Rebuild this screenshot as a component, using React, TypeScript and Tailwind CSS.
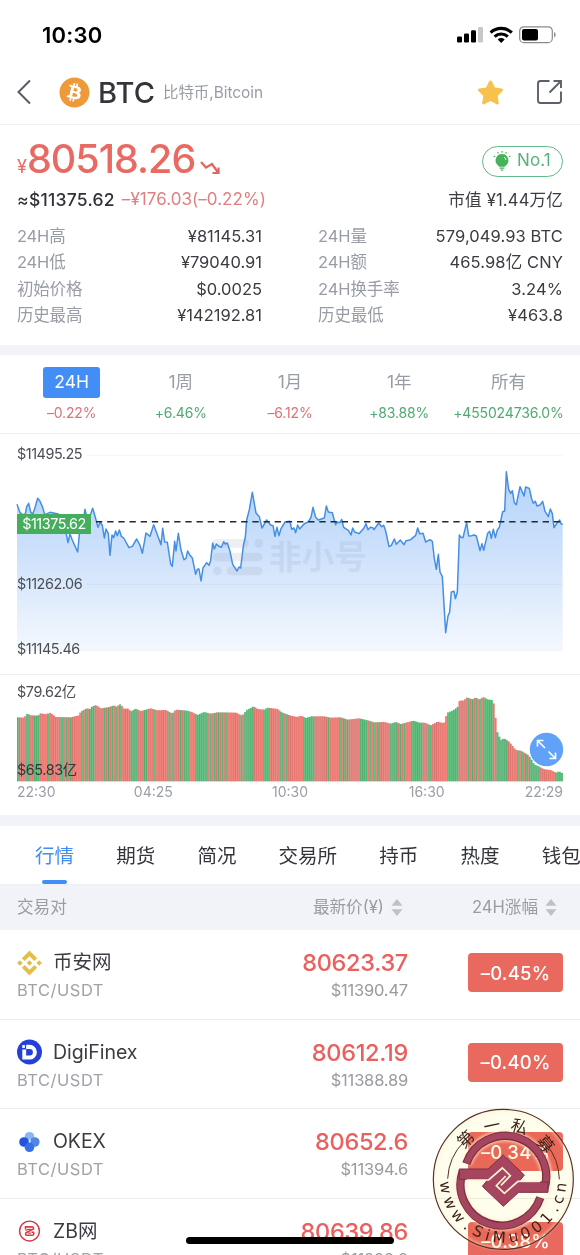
import { FaBitcoin, FaStar } from "react-icons/fa";
import { SiBinance } from "react-icons/si";

type Point = [number, number];

const stats = [
  ["24H高", "¥81145.31", "24H量", "579,049.93 BTC"],
  ["24H低", "¥79040.91", "24H额", "465.98亿 CNY"],
  ["初始价格", "$0.0025", "24H换手率", "3.24%"],
  ["历史最高", "¥142192.81", "历史最低", "¥463.8"],
];

const periods = [
  { label: "24H", change: "–0.22%", active: true },
  { label: "1周", change: "+6.46%" },
  { label: "1月", change: "–6.12%" },
  { label: "1年", change: "+83.88%" },
  { label: "所有", change: "+455024736.0%" },
];

const tabs = ["行情", "期货", "简况", "交易所", "持币", "热度", "钱包"];

// chart units are a third of a css pixel
const priceLine: Point[] = [
  [51, 193], [60, 218], [68, 224], [76, 222], [80, 200], [86, 190], [92, 216], [98, 222], [104, 206], [113, 175], [120, 184],
  [128, 202], [134, 224], [150, 217], [175, 222], [195, 262], [204, 308], [210, 282], [216, 298], [233, 336], [240, 262],
  [250, 240], [255, 208], [262, 236], [270, 228], [278, 205], [286, 232], [294, 262], [300, 247], [307, 256], [313, 294],
  [318, 267], [325, 281], [330, 346], [336, 285], [341, 293], [347, 273], [352, 287], [358, 270], [364, 289], [371, 294],
  [387, 323], [397, 319], [410, 297], [420, 316], [427, 340], [438, 279], [450, 289], [461, 254], [483, 314], [488, 265],
  [494, 306], [502, 307], [512, 372], [517, 379], [524, 304], [528, 333], [535, 280], [543, 330], [552, 359], [558, 355],
  [563, 333], [570, 346], [577, 354], [587, 403], [592, 388], [597, 387], [603, 423], [609, 384], [620, 368], [627, 376],
  [632, 362], [638, 309], [643, 327], [649, 312], [656, 318], [664, 322], [671, 305], [676, 312], [682, 309], [690, 334],
  [698, 373], [711, 393], [717, 381], [722, 384], [730, 318], [736, 291], [740, 240], [748, 209], [757, 157], [768, 219],
  [778, 230], [786, 264], [800, 240], [812, 255], [819, 257], [825, 289], [831, 262], [837, 287], [843, 266], [855, 246],
  [870, 244], [875, 268], [882, 264], [887, 278], [893, 255], [899, 267], [912, 252], [925, 245], [933, 232], [939, 202],
  [947, 232], [955, 240], [973, 234], [979, 198], [985, 216], [997, 218], [1003, 241], [1007, 254], [1012, 246],
  [1020, 248], [1025, 238], [1031, 262], [1045, 271], [1053, 285], [1058, 264], [1064, 276], [1077, 281], [1092, 264],
  [1098, 251], [1104, 269], [1111, 262], [1118, 263], [1122, 269], [1136, 249], [1145, 260], [1151, 256], [1157, 273],
  [1167, 320], [1174, 316], [1183, 297], [1189, 313], [1201, 300], [1212, 314], [1218, 302], [1232, 299], [1247, 286],
  [1253, 264], [1259, 281], [1269, 280], [1277, 306], [1290, 299], [1297, 304], [1303, 356], [1309, 388], [1315, 343],
  [1320, 396], [1327, 410], [1337, 578], [1344, 528], [1349, 516], [1354, 456], [1362, 454], [1366, 476], [1372, 456],
  [1378, 285], [1383, 292], [1389, 293], [1400, 247], [1406, 288], [1414, 287], [1422, 285], [1429, 288], [1440, 332],
  [1446, 311], [1451, 331], [1463, 280], [1469, 274], [1474, 295], [1480, 268], [1486, 293], [1492, 270], [1498, 262],
  [1508, 215], [1514, 213], [1519, 95], [1526, 148], [1532, 160], [1537, 152], [1543, 188], [1549, 194], [1560, 140],
  [1572, 168], [1577, 141], [1588, 145], [1595, 177], [1600, 190], [1606, 184], [1611, 198], [1620, 195], [1628, 184],
  [1635, 214], [1645, 230], [1651, 207], [1657, 221], [1662, 263], [1672, 248], [1679, 240], [1684, 253], [1688, 252],
];

const volumeTops: Point[] = [
  [51, 142], [70, 143], [80, 131], [90, 136], [112, 137], [118, 130], [140, 133], [145, 127], [155, 133], [165, 141],
  [210, 142], [235, 136], [240, 125], [258, 115], [268, 117], [272, 111], [285, 105], [300, 115], [322, 112], [340, 106],
  [345, 111], [360, 102], [368, 116], [383, 116], [390, 125], [405, 116], [420, 123], [450, 115], [470, 121], [495, 120],
  [515, 131], [525, 119], [560, 122], [575, 127], [590, 135], [610, 126], [630, 131], [650, 127], [705, 128], [725, 137],
  [738, 120], [752, 113], [758, 109], [770, 117], [790, 119], [800, 113], [830, 117], [845, 128], [870, 137], [890, 141],
  [902, 137], [915, 144], [932, 139], [970, 139], [990, 143], [1020, 142], [1040, 149], [1075, 145], [1105, 152],
  [1120, 157], [1150, 156], [1170, 161], [1185, 156], [1200, 162], [1220, 157], [1238, 152], [1255, 158], [1272, 158],
  [1290, 166], [1310, 155], [1330, 160], [1334, 145], [1340, 128], [1355, 122], [1370, 112], [1377, 91], [1390, 92],
  [1397, 82], [1415, 88], [1425, 82], [1435, 89], [1448, 81], [1460, 88], [1477, 91], [1483, 127], [1487, 180],
  [1500, 210], [1510, 205], [1525, 215], [1545, 240], [1560, 242], [1582, 255], [1590, 265], [1600, 283], [1612, 288],
  [1630, 298], [1650, 300], [1665, 308], [1675, 304], [1688, 312],
];

// [end of run, kind]: r = falling, g = rising, m = alternating
const volumeRuns: [number, string][] = [
  [54, "g"], [75, "r"], [90, "g"], [102, "r"], [118, "g"], [140, "r"], [153, "m"], [180, "r"], [192, "g"], [215, "m"],
  [236, "r"], [265, "m"], [283, "g"], [302, "r"], [365, "m"], [390, "r"], [412, "g"], [430, "r"], [440, "g"], [455, "r"],
  [468, "m"], [495, "r"], [520, "m"], [530, "r"], [555, "m"], [565, "g"], [585, "r"], [603, "g"], [612, "m"], [622, "g"],
  [685, "m"], [715, "r"], [728, "m"], [758, "g"], [788, "r"], [805, "g"], [840, "r"], [850, "g"], [870, "m"], [908, "r"],
  [940, "g"], [975, "r"], [985, "m"], [1010, "r"], [1045, "m"], [1078, "r"], [1100, "g"], [1132, "m"], [1170, "r"],
  [1190, "g"], [1220, "m"], [1232, "r"], [1268, "g"], [1280, "r"], [1295, "g"], [1337, "r"], [1373, "g"], [1400, "r"],
  [1453, "m"], [1475, "g"], [1485, "r"], [1520, "g"], [1545, "r"], [1590, "m"], [1620, "g"], [1655, "r"], [1670, "m"],
  [1690, "g"],
];

const BAR_COUNT = 288;
const BAR_STEP = (1689 - 51) / BAR_COUNT;

function topAt(x: number) {
  const i = volumeTops.findIndex((p) => p[0] >= x);
  if (i <= 0) return volumeTops[i === 0 ? 0 : volumeTops.length - 1][1];
  const [x0, y0] = volumeTops[i - 1];
  const [x1, y1] = volumeTops[i];
  return y0 + ((y1 - y0) * (x - x0)) / (x1 - x0);
}

const bars = Array.from({ length: BAR_COUNT }, (_, i) => {
  const x = 51 + i * BAR_STEP;
  const kind = volumeRuns.find((r) => r[0] > x)?.[1] ?? "g";
  const rising = kind === "g" || (kind === "m" && i % 2 === 0);
  return { x, y: topAt(x), rising };
});

const linePoints = priceLine.map((p) => p.join(",")).join(" ");

const sealUrl: [string, number][] = [
  ["w", 82], ["w", 66], ["w", 51], [".", 38], ["S", 26], ["i", 15.5], ["M", 4], ["u", -10],
  ["0", -22.5], ["0", -35], ["1", -48], [".", -60], ["c", -70], ["n", -82],
];
const sealName: [string, number][] = [["第", -43], ["一", -12], ["私", 17], ["募", 50]];

const StatusBar = () => (
  <div className="flex h-[60px] items-center justify-between pt-[10px] pr-[24px] pl-[42px]">
    <span className="text-[22px] font-semibold tracking-[0.2px] text-black">10:30</span>
    <svg width="99" height="18" viewBox="0 0 99 18">
      <rect x="0" y="10.5" width="5" height="6" rx="1.3" />
      <rect x="7" y="7.5" width="5" height="9" rx="1.3" />
      <rect x="14" y="4.2" width="5" height="12.3" rx="1.3" />
      <rect x="21" y="1" width="5" height="15.5" rx="1.3" fill="#c8c8c8" />
      <g fill="none" stroke="#000" strokeWidth="3.1">
        <path d="M33.6 6.6a15.5 15.5 0 0 1 21.2 0" />
        <path d="M37.6 10.7a9.6 9.6 0 0 1 13.2 0" />
      </g>
      <path d="M40.7 13.4a5.4 5.4 0 0 1 7 0L44.2 17Z" />
      <rect x="62.7" y="0.8" width="32.6" height="15.8" rx="4.2" fill="none" stroke="#8a8a8a" strokeWidth="1.2" />
      <rect x="65" y="3" width="16" height="11.5" rx="2" />
      <path d="M97 6v5.4a3 3 0 0 0 0-5.4Z" fill="#8a8a8a" />
    </svg>
  </div>
);

const Header = () => (
  <header className="flex h-[65px] items-center border-b border-[#f1f1f3] pr-[17px] pl-[17px]">
    <svg width="15" height="26" viewBox="0 0 15 26" fill="none" stroke="#585c64" strokeWidth="2">
      <path d="M13 1.5 1.5 13 13 24.5" />
    </svg>
    <FaBitcoin className="ml-[27px] size-[31px] text-[#ee9a3a]" />
    <h1 className="ml-[8px] pt-[2px] text-[29px] font-medium tracking-[0.1px] text-[#33353b]">BTC</h1>
    <span className="ml-[8px] pt-[2px] text-[15.4px] text-[#989ca5]">比特币,Bitcoin</span>
    <FaStar className="ml-auto size-[27px] text-[#f7c14e]" />
    <svg className="ml-[31px]" width="28" height="26" viewBox="0 0 28 26" fill="none" stroke="#5b6069" strokeWidth="1.9">
      <path d="M14.5 2H5.5Q3 2 3 4.5V21.5Q3 24 5.5 24H23.5Q26 24 26 21.5V12.5" />
      <path d="M18.5 2H26V9M26 2 14.5 13.5" />
    </svg>
  </header>
);

const Summary = () => (
  <section className="h-[220px] px-[17px] pt-[13px]">
    <div className="flex h-[42px] items-center">
      <div className="flex items-baseline text-[#e96a63]">
        <span className="text-[18px]">¥</span>
        <span className="text-[39.5px] leading-[40px] font-medium tracking-[-1px]">80518.26</span>
        <svg className="relative top-[2px] ml-[5px]" width="21" height="15" viewBox="0 0 21 15" fill="none" stroke="#e06660" strokeWidth="2.2">
          <path d="M1 2l5 5.5 6-3.5 6 8.5M12.5 13h6V7.5" />
        </svg>
      </div>
      <div className="mt-[4px] ml-auto flex h-[31px] w-[81px] items-center rounded-full border border-[#62b98a] pl-[10px] text-[#54b37c]">
        <svg width="18" height="20" viewBox="0 0 18 20" fill="#46b35a">
          <path d="M9 3a6.4 6.4 0 0 0-4 11.4l1.4 1.4h5.2l1.4-1.4A6.4 6.4 0 0 0 9 3ZM6.600 16.600h4.800v1.200H6.600ZM7.400 18.400h3.200l-.8 1.400H8.200Z" />
          <path d="M9 0v1.8M4.5 1l.8 1.5M13.5 1l-.8 1.5M.6 5l1.5.7M17.4 5l-1.5.7" stroke="#46b35a" strokeWidth="1.1" />
          <path d="M11 6.2q1.8.8 2 2.7" fill="none" stroke="#fff" strokeWidth="1" />
        </svg>
        <span className="ml-[6px] text-[17px] tracking-[0.1px]">No.1</span>
      </div>
    </div>
    <div className="mt-[4px] flex h-[32px] items-center text-[17px]">
      <span className="text-[17.5px] font-medium tracking-[0.25px] text-[#303237]">≈$11375.62</span>
      <span className="ml-[7px] tracking-[0.05px] text-[#e27e80]">–¥176.03(–0.22%)</span>
      <span className="ml-auto text-[16.6px] tracking-[0.15px] text-[#3a3c42]">市值 ¥1.44万亿</span>
    </div>
    <div className="mt-[7px]">
      {stats.map(([a, b, c, d]) => (
        <div key={a} className="flex h-[26.5px] items-center text-[16.5px] text-[#3a3c42]">
          <span className="w-[100px] tracking-[-0.2px] text-[#989ca5]">{a}</span>
          <span className="w-[145px] text-right">{b}</span>
          <span className="ml-[56px] tracking-[-0.1px] text-[#989ca5]">{c}</span>
          <span className="ml-auto tracking-[0.1px]">{d}</span>
        </div>
      ))}
    </div>
  </section>
);

const Periods = () => (
  <div className="grid h-[79px] grid-cols-5 border-b border-[#f0f1f3] px-[17px] pt-[12px]">
    {periods.map((p) => (
      <div key={p.label} className="flex flex-col items-center whitespace-nowrap">
        <span
          className={`flex h-[31px] items-center justify-center rounded-[3px] text-[17.5px] ${
            p.active ? "w-[57px] bg-[#428df6] text-white" : "text-[#989ca5]"
          }`}
        >
          {p.label}
        </span>
        <span
          className={`mt-[5px] text-[14px] leading-[20px] tracking-[-0.15px] ${
            p.change.startsWith("+") ? "text-[#4fa971]" : "text-[#dc7277]"
          }`}
        >
          {p.change}
        </span>
      </div>
    ))}
  </div>
);

const PriceChart = () => (
  <section className="relative h-[240px]">
    <svg width="580" height="240" viewBox="0 0 1740 720">
      <defs>
        <linearGradient id="area" x1="0" y1="0" x2="0" y2="1">
          <stop offset="0" stopColor="#b5d3fa" />
          <stop offset="0.45" stopColor="#cde1fb" />
          <stop offset="1" stopColor="#f4f8fe" />
        </linearGradient>
      </defs>
      <g transform="translate(0 18)">
        <path d="M260 46H1688" stroke="#f3f4f6" strokeWidth="3" />
        <polygon points={`51,631 ${linePoints} 1688,631`} fill="url(#area)" />
        <path d="M260 433H1688M51 631H1688" stroke="#8895aa" strokeOpacity="0.1" strokeWidth="3" />
        <g fill="#8494ae" fillOpacity="0.15">
          <rect x="638" y="297" width="108" height="26" rx="13" />
          <circle cx="776" cy="310" r="13" />
          <rect x="638" y="338" width="150" height="26" rx="13" />
          <circle cx="652" cy="393" r="13" />
          <rect x="680" y="380" width="108" height="26" rx="13" />
          <text x="807" y="388" fontSize="98" fontWeight="700">非小号</text>
        </g>
        <polyline points={linePoints} fill="none" stroke="#458fe3" strokeWidth="4.5" strokeLinejoin="round" />
        <path d="M288 245H1688" stroke="#25282d" strokeWidth="4.5" strokeDasharray="19 14.5" />
      </g>
    </svg>
    <div className="absolute inset-y-0 left-[17px] text-[14.4px] leading-[18px] tracking-[-0.45px] text-[#4b4e55]">
      <span className="absolute top-[11px]">$11495.25</span>
      <span className="absolute top-[80px] flex h-[20px] w-[74px] items-center justify-center bg-[#45ae5d] text-white">
        $11375.62
      </span>
      <span className="absolute top-[141px]">$11262.06</span>
      <span className="absolute top-[206px]">$11145.46</span>
    </div>
  </section>
);

const VolumeChart = () => (
  <section className="relative h-[141px] border-t border-[#eeeff2]">
    <svg width="580" height="108" viewBox="0 0 1740 324">
      <g transform="translate(0 -15)">
        {bars.map((b) => (
          <g key={b.x}>
            <rect x={b.x} y={b.y} width={BAR_STEP} height={334 - b.y} fill={b.rising ? "#62c180" : "#f1827a"} />
            <rect x={b.x} y={b.y} width="1.4" height={334 - b.y} fill={b.rising ? "#3c9c5c" : "#c96460"} />
          </g>
        ))}
      </g>
    </svg>
    <div className="flex px-[17px] text-[14px] leading-[18px] text-[#999da5]">
      <span className="w-[68px]">22:30</span>
      <span className="flex-1 text-center">04:25</span>
      <span className="flex-1 text-center">10:30</span>
      <span className="flex-1 text-center">16:30</span>
      <span className="w-[68px] text-right">22:29</span>
    </div>
    <span className="absolute top-[8px] left-[17px] text-[14.4px] leading-[18px] tracking-[-0.4px] text-[#4b4e55]">$79.62亿</span>
    <span className="absolute top-[86px] left-[17px] text-[14.4px] leading-[18px] tracking-[-0.4px] text-[#35363a]">$65.83亿</span>
    <svg className="absolute top-[57px] left-[529px]" width="35" height="35" viewBox="0 0 35 35">
      <circle cx="17.5" cy="17.5" r="16.7" fill="#5fa2f8" />
      <path d="M16 16 9 9M8.5 14.5V8.5H14.5M19.5 19.5 26 26M26.5 20.5V26.5H20.5" fill="none" stroke="#fff" strokeWidth="1.6" />
    </svg>
  </section>
);

const SortIcon = () => (
  <svg width="12" height="17" viewBox="0 0 12 17" fill="#bfc1c6">
    <path d="M6 0 11.5 6.8H.5ZM6 17 .5 10.2H11.5Z" />
  </svg>
);

const DigiFinexLogo = () => (
  <svg width="26" height="26" viewBox="0 0 26 26">
    <circle cx="13" cy="13" r="13" fill="#2440db" />
    <path d="M9.5 5.5H13a7.7 7.7 0 0 1 0 15.4H5.5V10.5H9.5Z" fill="#fff" />
    <path d="M5.5 5.8h2.7v3H5.5Z" fill="#fff" />
    <path d="M9.5 10h3.7a3.3 3.3 0 0 1 0 6.6H9.5Z" fill="#2440db" />
  </svg>
);

const OkexLogo = () => (
  <svg width="26" height="26" viewBox="0 0 26 26">
    <circle cx="13" cy="7.5" r="5" fill="#8bb8f0" />
    <circle cx="18.5" cy="13" r="5" fill="#5286e6" />
    <circle cx="7.3" cy="13" r="5" fill="#2454df" />
    <circle cx="13" cy="18.5" r="5" fill="#3870e6" />
    <path d="M12.5 10.5h1.5v3l-1.5-1Z" fill="#fff" />
  </svg>
);

const ZbLogo = () => (
  <svg width="26" height="26" viewBox="0 0 26 26" fill="none" stroke="#d53a48">
    <circle cx="13" cy="13" r="10.3" strokeWidth="1.5" />
    <path d="M8.8 11.5V8.7H15.5Q17.6 8.7 17.2 10.8L9.3 15Q8.2 17.5 10.3 17.5H15.7Q18 17.5 17.3 14.2H15" strokeWidth="1.6" />
    <path d="M9 12.3 12 11.2H14.5M11.5 15.3H14.5" strokeWidth="1.3" />
  </svg>
);

const markets = [
  { name: "币安网", logo: <SiBinance className="size-[26px] text-[#e6bd4a]" />, price: "80623.37", usd: "$11390.47", change: "–0.45%" },
  { name: "DigiFinex", logo: <DigiFinexLogo />, price: "80612.19", usd: "$11388.89", change: "–0.40%" },
  { name: "OKEX", logo: <OkexLogo />, price: "80652.6", usd: "$11394.6", change: "–0.34%" },
  { name: "ZB网", logo: <ZbLogo />, price: "80639.86", usd: "$11392.8", change: "–0.38%" },
];

const Markets = () => (
  <section>
    <nav className="flex h-[59px] gap-[42.2px] overflow-hidden border-b border-[#eeeff2] pl-[35px] text-[19.5px] whitespace-nowrap text-[#33353b]">
      {tabs.map((t, i) => (
        <span key={t} className={`relative flex h-[58px] shrink-0 items-center justify-center pt-[3px] ${i === 0 ? "text-[#428df6]" : ""}`}>
          {t}
          {i === 0 && <i className="absolute bottom-0 h-[4px] w-[25px] rounded-full bg-[#428df6]" />}
        </span>
      ))}
    </nav>
    <div className="flex h-[45px] items-center bg-[#f2f3f8] px-[17px] text-[16.6px] text-[#989ca5]">
      <span>交易对</span>
      <span className="ml-auto">最新价(¥)</span>
      <span className="ml-[7px]"><SortIcon /></span>
      <span className="ml-[69px]">24H涨幅</span>
      <span className="mr-[6px] ml-[7px]"><SortIcon /></span>
    </div>
    {markets.map((m) => (
      <div key={m.name} className="flex h-[89.5px] border-b border-[#ececef] px-[17px] pt-[18px]">
        <div className="w-[190px]">
          <div className="flex h-[29px] items-center">
            <span className="flex w-[25px] justify-center">{m.logo}</span>
            <span className="ml-[11px] pt-px text-[19.5px] tracking-[-0.05px] text-[#3a3c42]">{m.name}</span>
          </div>
          <div className="text-[16.5px] leading-[26px] tracking-[0.5px] text-[#a0a2a7]">BTC/USDT</div>
        </div>
        <div className="w-[201px] text-right">
          <div className="text-[23.5px] leading-[29px] font-medium tracking-[-0.3px] text-[#e9605d]">{m.price}</div>
          <div className="text-[16.5px] leading-[26px] tracking-[-0.2px] text-[#999ba0]">{m.usd}</div>
        </div>
        <div className="mt-[5px] ml-auto flex h-[39px] w-[95px] items-center justify-center rounded-[4px] bg-[#ea695f] pt-[2px] text-[18.5px] font-medium tracking-[0.2px] text-white">
          {m.change}
        </div>
      </div>
    ))}
  </section>
);

const Seal = () => (
  <>
    <svg className="absolute top-[1108px] left-[432px] mix-blend-multiply" width="143" height="143" viewBox="36 24 429 429">
      <circle cx="250" cy="238" r="208" fill="#fffdec" />
    </svg>
    <svg className="absolute top-[1108px] left-[432px]" width="143" height="143" viewBox="36 24 429 429">
      <defs>
        <filter id="glow" x="-20%" y="-20%" width="140%" height="140%">
          <feGaussianBlur stdDeviation="5" />
        </filter>
      </defs>
      <g fill="none" stroke="#fff0cc" strokeOpacity="0.7" strokeWidth="34" filter="url(#glow)">
        <path d="M138 190A122 122 0 0 1 372 275M128 207A122 122 0 0 0 366 292" />
        <circle cx="250" cy="238" r="207" strokeWidth="5" />
      </g>
      <circle cx="250" cy="238" r="210" fill="none" stroke="#533126" strokeWidth="3.5" />
      <path d="M83 236A168 168 0 0 1 132 125M418 238A168 168 0 0 0 378 132" fill="none" stroke="#533126" strokeWidth="3" />
      <g fill="none" stroke="#7c3044" strokeWidth="25">
        <path d="M139 191A122 122 0 0 1 372 270M128 214A122 122 0 0 0 361 293" />
      </g>
      <g fill="none" stroke="#a64560" strokeWidth="18">
        <path d="M140 189A122 122 0 0 1 372 270M128 214A122 122 0 0 0 360 295" />
      </g>
      <path
        d="M118 207H204L250 165 313 225 296 246H384V277H296L250 319 187 259 204 238H118Z"
        fill="#a64560"
        stroke="#7c3044"
        strokeWidth="3"
      />
      <path
        d="M140 240H206L247 204 271 227 243 256M360 244H294L253 280 229 257 257 228"
        fill="none"
        stroke="#fff3d6"
        strokeWidth="5"
      />
      <g fill="#3d241d" textAnchor="middle">
        {sealUrl.map(([c, a], i) => (
          <text key={i} x="250" y="428" fontSize="46" fontFamily="DejaVu Sans" transform={`rotate(${a} 250 238)`}>
            {c}
          </text>
        ))}
        {sealName.map(([c, a]) => (
          <text key={c} x="250" y="91" fontSize="50" transform={`rotate(${a} 250 238)`}>
            {c}
          </text>
        ))}
      </g>
    </svg>
  </>
);

export default function App() {
  return (
    <main className="relative h-[1255px] w-[580px] overflow-hidden bg-white font-[Inter,'Noto_Sans_CJK_SC',sans-serif]">
      <StatusBar />
      <Header />
      <Summary />
      <div className="h-[10px] bg-[#f2f3f8]" />
      <Periods />
      <PriceChart />
      <VolumeChart />
      <div className="h-[11px] bg-[#f2f3f8]" />
      <Markets />
      <Seal />
      <div className="absolute top-[1237px] left-[186px] h-[7px] w-[208px] rounded-full bg-black" />
    </main>
  );
}
